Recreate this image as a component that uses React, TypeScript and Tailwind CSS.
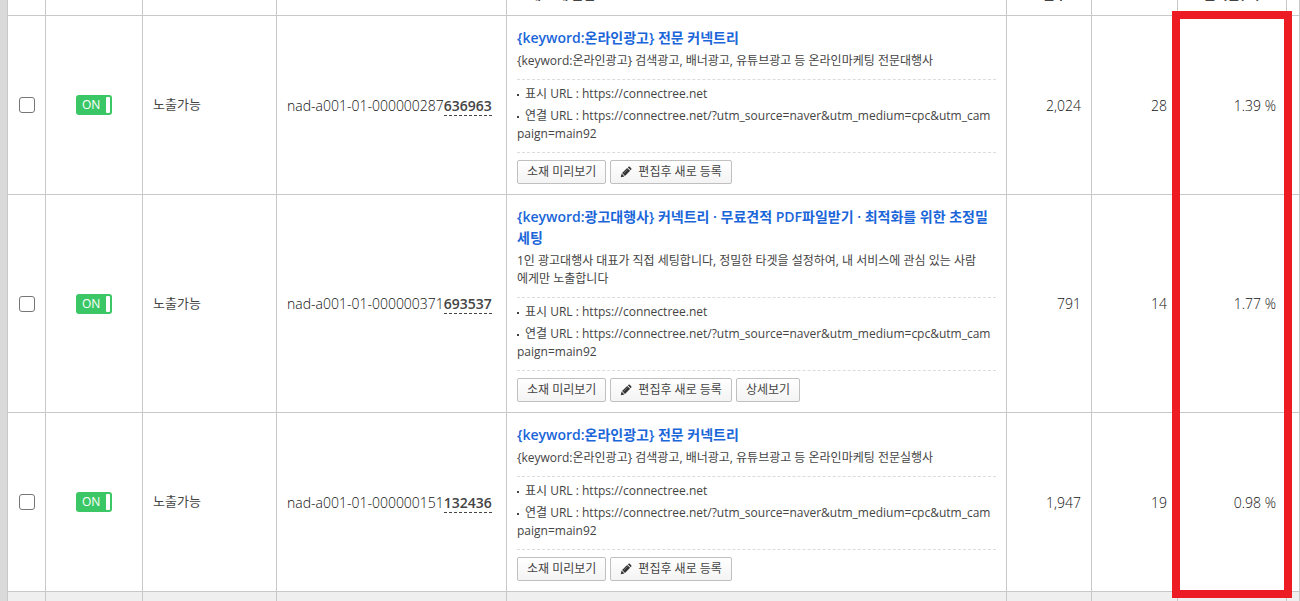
import React, { useState } from 'react';

type Creative = {
  idPrefix: string;
  idSuffix: string;
  title: string;
  description: string;
  impressions: string;
  clicks: string;
  ctr: string;
  hasDetail?: boolean;
};

const DISPLAY_URL = 'https://connectree.net';
const LANDING_URL =
  'https://connectree.net/?utm_source=naver&utm_medium=cpc&utm_campaign=main92';

const creatives: Creative[] = [
  {
    idPrefix: 'nad-a001-01-000000287',
    idSuffix: '636963',
    title: '{keyword:온라인광고} 전문 커넥트리',
    description: '{keyword:온라인광고} 검색광고, 배너광고, 유튜브광고 등 온라인마케팅 전문대행사',
    impressions: '2,024',
    clicks: '28',
    ctr: '1.39 %',
  },
  {
    idPrefix: 'nad-a001-01-000000371',
    idSuffix: '693537',
    title: '{keyword:광고대행사} 커넥트리 · 무료견적 PDF파일받기 · 최적화를 위한 초정밀 세팅',
    description:
      '1인 광고대행사 대표가 직접 세팅합니다, 정밀한 타겟을 설정하여, 내 서비스에 관심 있는 사람에게만 노출합니다',
    impressions: '791',
    clicks: '14',
    ctr: '1.77 %',
    hasDetail: true,
  },
  {
    idPrefix: 'nad-a001-01-000000151',
    idSuffix: '132436',
    title: '{keyword:온라인광고} 전문 커넥트리',
    description: '{keyword:온라인광고} 검색광고, 배너광고, 유튜브광고 등 온라인마케팅 전문실행사',
    impressions: '1,947',
    clicks: '19',
    ctr: '0.98 %',
  },
];

const cell = 'border border-[#c8c8c8] px-[10px]';
const headCell = 'border border-[#c8c8c8] px-[10px] pb-[2px]';
const numberCell = 'border border-[#c8c8c8] px-[10px] text-right text-[14px] font-light text-[#111]';

function PencilIcon() {
  return (
    <svg viewBox="0 0 12 12" className="mr-[6px] size-3" fill="#333" aria-hidden="true">
      <path d="M0.8 11.2 L1.6 7.6 L4.4 10.4 Z" />
      <path d="M2.1 7 L7.2 1.9 L10.1 4.8 L5 9.9 Z" />
      <path d="M7.8 1.3 L8.5 0.7 Q9.1 0.2 9.8 0.8 L11.2 2.2 Q11.8 2.9 11.3 3.5 L10.7 4.2 Z" />
      <path d="M3.6 7.4 L7.6 3.4" stroke="#999" strokeWidth="0.6" />
    </svg>
  );
}

function SmallButton({ children }: { children: React.ReactNode }) {
  return (
    <button
      type="button"
      className="flex h-6 items-center rounded-xs border border-[#c0c0c0] bg-linear-to-b from-white to-[#f4f4f4] px-[9px] text-[12px]"
    >
      {children}
    </button>
  );
}

function OnOffToggle({ id }: { id: string }) {
  const [on, setOn] = useState(true);
  return (
    <button
      type="button"
      role="switch"
      aria-checked={on}
      aria-label={id}
      onClick={() => setOn(!on)}
      className={`mx-auto flex h-5 w-9 items-center justify-between rounded-[3px] pr-[2px] pl-[6px] text-[12px] text-white ${
        on ? 'bg-[#3cc766]' : 'bg-gray-400'
      }`}
    >
      {on ? 'ON' : 'OFF'}
      <span className="h-4 w-1 rounded-[1px] bg-white" />
    </button>
  );
}

function UrlItem({ label, url }: { label: string; url: string }) {
  return (
    <li>
      <span className="mr-[6px] inline-block size-[2px] bg-[#444] align-middle" />
      {`${label} : ${url}`}
    </li>
  );
}

function CreativeInfo({ item }: { item: Creative }) {
  return (
    <div className="pt-[11px] pb-[10px] text-[12px] leading-[18px]">
      <a href="#" className="block text-[14px] leading-[21px] font-semibold break-all text-[#1a66d9]">
        {item.title}
      </a>
      <p className="mt-1 pr-3 break-all">{item.description}</p>
      <ul className="mt-[9px] flex flex-col gap-1 border-y border-dashed border-[#dcdcdc] pt-[5px] pb-[9px] break-all">
        <UrlItem label="표시 URL" url={DISPLAY_URL} />
        <UrlItem label="연결 URL" url={LANDING_URL} />
      </ul>
      <div className="mt-[7px] flex gap-1">
        <SmallButton>소재 미리보기</SmallButton>
        <SmallButton>
          <PencilIcon />
          편집후 새로 등록
        </SmallButton>
        {item.hasDetail && <SmallButton>상세보기</SmallButton>}
      </div>
    </div>
  );
}

export default function App() {
  return (
    <div className="relative h-screen overflow-hidden border-l-7 border-[#dadada] bg-white font-['Open_Sans','Noto_Sans_CJK_KR',sans-serif] text-[13px] text-[#444]">
      {/* the list is scrolled, so the header row is mostly out of view */}
      <table className="-mt-[25px] w-full table-fixed border-collapse">
        <colgroup>
          <col className="w-[38px]" />
          <col className="w-[97px]" />
          <col className="w-[134px]" />
          <col className="w-[230px]" />
          <col />
          <col className="w-[85px]" />
          <col className="w-[86px]" />
          <col className="w-[109px]" />
          <col className="w-[13px]" />
        </colgroup>
        <thead>
          <tr className="h-10">
            <th className={headCell} />
            <th className={headCell} />
            <th className={headCell} />
            <th className={headCell} />
            <th className={`${headCell} text-left`}>소재 소재 문안</th>
            <th className={headCell}>노출수</th>
            <th className={headCell} />
            <th className={headCell}>클릭률(%)</th>
            <th className="border border-[#c8c8c8]" />
          </tr>
        </thead>
        <tbody>
          {creatives.map((item) => (
            <tr key={item.idSuffix}>
              <td className="border border-[#c8c8c8]">
                <input
                  type="checkbox"
                  aria-label={item.idPrefix + item.idSuffix}
                  className="mx-auto block size-4 appearance-none rounded-[3px] border border-[#767676] bg-white checked:bg-[#1a66d9]"
                />
              </td>
              <td className={cell}>
                <OnOffToggle id={item.idSuffix} />
              </td>
              <td className={cell}>노출가능</td>
              <td className={`${cell} text-[14px] font-light text-[#111]`}>
                {item.idPrefix}
                <strong className="border-b border-dashed border-[#444] font-semibold text-[#444]">
                  {item.idSuffix}
                </strong>
              </td>
              <td className={cell}>
                <CreativeInfo item={item} />
              </td>
              <td className={numberCell}>{item.impressions}</td>
              <td className={numberCell}>{item.clicks}</td>
              <td className={numberCell}>{item.ctr}</td>
              <td className="border border-[#c8c8c8]" />
            </tr>
          ))}
          <tr className="h-10 bg-[#efefef]">
            <td className={cell} />
            <td className={cell} />
            <td className={cell} />
            <td className={cell} />
            <td className={cell} />
            <td className={cell} />
            <td className={cell} />
            <td className={cell} />
            <td className="border border-[#c8c8c8]" />
          </tr>
        </tbody>
      </table>

      {/* click-through rate highlight */}
      <div className="pointer-events-none absolute top-[11px] right-2 bottom-[3px] w-[120px] border-8 border-[#ed1c24]" />
    </div>
  );
}
